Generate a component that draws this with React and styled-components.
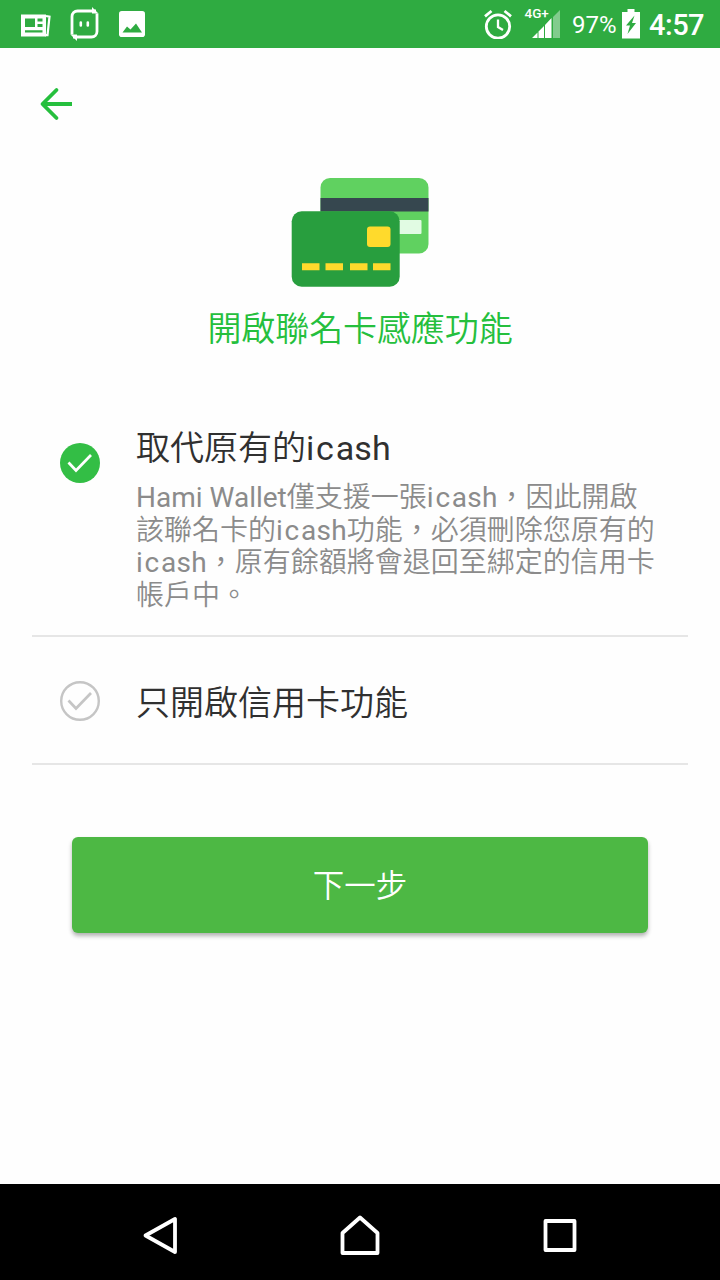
import React, { useState } from 'react';
import styled, { createGlobalStyle } from 'styled-components';

const GlobalStyle = createGlobalStyle`
    * {
        box-sizing: border-box;
    }

    body {
        margin: 0;
        background: #fff;
        font-family: Roboto, "Noto Sans CJK TC", sans-serif;
    }
`;

const Screen = styled.div`
    display: flex;
    flex-direction: column;
    width: 720px;
    height: 1280px;
    background: #fefefe;
    overflow: hidden;
`;

const StatusBar = styled.header`
    display: flex;
    justify-content: space-between;
    height: 48px;
    flex: none;
    padding: 0 16px 0 20px;
    background: #2fab41;
    color: #fff;
`;

const StatusGroup = styled.div`
    display: flex;
    align-items: center;
    gap: ${(props) => props.$gap || 0}px;
`;

const Battery = styled.span`
    width: 50px;
    font-size: 24px;
    line-height: 48px;
    padding-top: 2px;
`;

const Clock = styled.span`
    font-size: 29px;
    font-weight: 500;
    line-height: 48px;
    width: 55px;
    padding-top: 1px;
    letter-spacing: -0.5px;
    white-space: nowrap;
`;

const Main = styled.main`
    flex: 1;
    display: flex;
    flex-direction: column;
    padding: 0 32px;
`;

const BackButton = styled.button`
    display: flex;
    align-self: flex-start;
    margin: 39px 0 0 6px;
    padding: 0;
    border: 0;
    background: none;
`;

const Hero = styled.section`
    display: flex;
    flex-direction: column;
    align-items: center;
    padding-top: 56px;
`;

const Title = styled.h1`
    margin: 22px 0 0;
    font-size: 34px;
    font-weight: 350;
    line-height: 40px;
    letter-spacing: -0.1px;
    color: #25bf3d;
`;

const Options = styled.section`
    margin-top: 55px;
`;

const Option = styled.div`
    display: flex;
    height: ${(props) => props.$height}px;
    padding-left: 27px;
    border-bottom: 2px solid #e6e6e6;
`;

const Check = styled.div`
    flex: none;
    display: flex;
    width: 42px;
    margin: ${(props) => props.$top || 0}px 35px 0 0;
`;

const OptionBody = styled.div`
    padding-top: ${(props) => props.$top}px;
`;

const OptionTitle = styled.h2`
    margin: 0;
    font-size: 34px;
    font-weight: 350;
    line-height: 40px;
    color: #303030;
`;

const OptionText = styled.p`
    margin: 14px 0 0;
    font-size: 28px;
    font-weight: 350;
    line-height: 32.7px;
    color: #8b8b8b;
    white-space: nowrap;
`;

const Latin = styled.span`
    font-weight: 400;
    letter-spacing: ${(props) => props.$spacing || 0}px;
`;

const NextButton = styled.button`
    height: 96px;
    margin: 72px 40px 0;
    padding: 0 0 4px;
    border: 0;
    border-radius: 6px;
    background: #4db844;
    box-shadow: 0 3px 4px rgba(0, 0, 0, 0.3);
    color: #fff;
    font-family: inherit;
    font-size: 31.5px;
    font-weight: 350;
`;

const NavBar = styled.nav`
    display: flex;
    justify-content: space-between;
    align-items: center;
    flex: none;
    height: 96px;
    padding: 6px 140px 0;
    background: #000;
`;

function NewsIcon() {
    return (
        <svg width="32" height="26" viewBox="0 0 32 26">
            <path fill="#fff" fillRule="evenodd" d="M1 3.500h25v22H1zM5 7.500V16h10V7.500zM17.500 7.500v3h5v-3zM17.500 13v3h5v-3zM5 19.300v2.200h17.500v-2.200z" />
            <path d="M26 5l3.500.7-2 18.500H25" fill="none" stroke="#fff" strokeWidth="2.200" />
        </svg>
    );
}

function RobotIcon() {
    return (
        <svg width="31" height="34" viewBox="0 0 31 34">
            <path d="M2 27.500V9.500a5.500 5.500 0 0 1 5.500-5.500H26M27 6.500v18a5.500 5.500 0 0 1-5.500 5.500H3" fill="none" stroke="#fff" strokeWidth="2.800" />
            <path d="M22 0l6.500 6.500H22zM7 34L.5 27.500H7z" fill="#fff" />
            <path d="M10.800 15.500v3M17.800 15.500v3" stroke="#fff" strokeWidth="2.600" strokeLinecap="round" />
        </svg>
    );
}

function PhotoIcon() {
    return (
        <svg width="26" height="26" viewBox="0 0 26 26">
            <rect width="26" height="26" rx="2.800" fill="#fff" />
            <path d="M3.500 21.500L8 15.500l3.500 3 5.500-6 6 9z" fill="#2fab41" />
        </svg>
    );
}

function AlarmIcon() {
    return (
        <svg width="28" height="30" viewBox="0 0 28 30" fill="none" stroke="#fff" strokeWidth="2.800">
            <circle cx="14" cy="17.500" r="11.700" />
            <path d="M14 10.500V18l5 3" strokeWidth="2.300" />
            <path d="M1 7.300L7.500 2M27 7.300L20.500 2" />
        </svg>
    );
}

function SignalIcon() {
    return (
        <svg width="38" height="42" viewBox="0 -4 38 42">
            <text x="0.500" y="11.300" fill="#fff" fontFamily="Roboto, sans-serif" fontSize="13.500" fontWeight="500">4G+</text>
            <path d="M8 31l5.500-5.500V31zM14.500 24.500l5.500-5.500V31h-5.500zM21 18l6.500-7V31H21z" fill="#fff" />
            <path d="M29 10l7-7v28h-7z" fill="#fff" opacity="0.4" />
        </svg>
    );
}

function ChargingIcon() {
    return (
        <svg width="18" height="30" viewBox="0 0 18 30">
            <path d="M5.500 0h7v3H18v26.500H0V3h5.500z" fill="#fff" />
            <path d="M12.500 6.500L4 16.500h4L5.500 25 14 14h-4z" fill="#2fab41" />
        </svg>
    );
}

function BackIcon() {
    return (
        <svg width="36" height="34" viewBox="0 0 36 34" fill="none" stroke="#25bf3d" strokeWidth="4">
            <path d="M34 17H6" />
            <path d="M18.500 3L4.500 17 18.500 31" strokeLinecap="round" strokeLinejoin="round" strokeWidth="3.800" />
        </svg>
    );
}

function CardsIcon() {
    return (
        <svg width="138" height="110" viewBox="0 0 138 110">
            <rect x="29.500" y="1" width="108" height="75.500" rx="9.500" fill="#60d160" />
            <path d="M29.500 21h108v13.500h-108z" fill="#36474f" />
            <rect x="100" y="43" width="30.500" height="14" rx="1" fill="#e1fbe3" />
            <rect x="0.700" y="34.300" width="108" height="75.500" rx="10" fill="#289e3e" />
            <rect x="76" y="49.500" width="23.500" height="20.500" rx="3" fill="#ffda2c" />
            <path d="M11 86.300h17.500v7H11zM34.500 86.300H52v7H34.500zM59 86.300h17.500v7H59zM82 86.300h17.500v7H82z" fill="#ffda2c" />
        </svg>
    );
}

function CheckIcon({ checked }) {
    return (
        <svg width="42" height="42" viewBox="0 0 42 42" fill="none">
            {checked
                ? <circle cx="21" cy="21" r="20" fill="#33be45" />
                : <circle cx="21" cy="21" r="18.800" stroke="#c5c5c5" strokeWidth="2.400" />}
            <path d="M9.500 20.500l7.500 8L32 13" stroke={checked ? '#fff' : '#c5c5c5'} strokeWidth="2.700" />
        </svg>
    );
}

function NavIcon({ d }) {
    return (
        <svg width="40" height="42" viewBox="0 0 40 42">
            <path d={d} fill="none" stroke="#fff" strokeWidth="3.800" strokeLinejoin="round" />
        </svg>
    );
}

function Icash() {
    return <><Latin $spacing={1.8}>ic</Latin><Latin $spacing={0.2}>ash</Latin></>;
}

export default function App() {
    const [selected, setSelected] = useState('icash');

    return (
        <>
            <GlobalStyle />
            <Screen>
                <StatusBar>
                    <StatusGroup $gap={18}>
                        <NewsIcon />
                        <RobotIcon />
                        <PhotoIcon />
                    </StatusGroup>
                    <StatusGroup $gap={10}>
                        <StatusGroup $gap={12}>
                            <AlarmIcon />
                            <SignalIcon />
                        </StatusGroup>
                        <StatusGroup $gap={9}>
                            <StatusGroup>
                                <Battery>97%</Battery>
                                <ChargingIcon />
                            </StatusGroup>
                            <Clock>4:57</Clock>
                        </StatusGroup>
                    </StatusGroup>
                </StatusBar>

                <Main>
                    <BackButton aria-label="返回">
                        <BackIcon />
                    </BackButton>

                    <Hero>
                        <CardsIcon />
                        <Title>開啟聯名卡感應功能</Title>
                    </Hero>

                    <Options>
                        <Option $height={233} onClick={() => setSelected('icash')}>
                            <Check $top={38}>
                                <CheckIcon checked={selected === 'icash'} />
                            </Check>
                            <OptionBody $top={24}>
                                <OptionTitle>取代原有的<Icash /></OptionTitle>
                                <OptionText>
                                    <Latin>Hami Wallet</Latin>僅支援一張<Icash />，因此開啟<br />
                                    該聯名卡的<Icash />功能，必須刪除您原有的<br />
                                    <Icash />，原有餘額將會退回至綁定的信用卡<br />
                                    帳戶中。
                                </OptionText>
                            </OptionBody>
                        </Option>
                        <Option $height={128} onClick={() => setSelected('credit')}>
                            <Check $top={43}>
                                <CheckIcon checked={selected === 'credit'} />
                            </Check>
                            <OptionBody $top={46}>
                                <OptionTitle>只開啟信用卡功能</OptionTitle>
                            </OptionBody>
                        </Option>
                    </Options>

                    <NextButton>下一步</NextButton>
                </Main>

                <NavBar>
                    <NavIcon d="M35 5v33L5.500 21.500z" />
                    <NavIcon d="M20 3.500L37.500 19v20H2.500V19z" />
                    <NavIcon d="M5.500 7h29v29h-29z" />
                </NavBar>
            </Screen>
        </>
    );
}
